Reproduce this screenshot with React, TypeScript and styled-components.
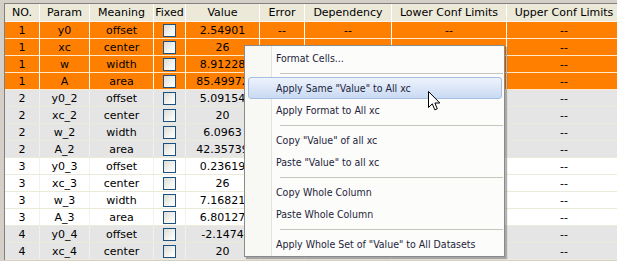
import React from 'react';
import styled, { createGlobalStyle } from 'styled-components';

const GlobalStyle = createGlobalStyle`
  html, body {
    margin: 0;
    padding: 0;
    overflow: hidden;
    background: #ffffff;
  }
`;

const Frame = styled.div`
  position: relative;
  width: 617px;
  height: 261px;
  overflow: hidden;
  background: #d4d0c8;
  padding: 3px 0 0 4px;
  box-sizing: border-box;
  font-family: "DejaVu Sans", Verdana, sans-serif;
  font-size: 11px;
`;

const Sheet = styled.div`
  border-top: 1px solid #808080;
  border-left: 1px solid #808080;
  background: #ffffff;
  width: 720px;
`;

const COLS = '35px 50px 64px 32px 74px 45px 87px 115px 115px';

const HeaderRow = styled.div`
  display: grid;
  grid-template-columns: ${COLS};
  height: 18px;
  background: #ece9d8;
  border-bottom: 1px solid #f6f5ee;
  box-sizing: border-box;
`;

const HeadCell = styled.div`
  display: flex;
  align-items: center;
  justify-content: center;
  border-right: 1px solid #ffffff;
  color: #000000;
  white-space: nowrap;
  overflow: hidden;
`;

const Row = styled.div<{ $tone: 'sel' | 'grey' | 'white' }>`
  display: grid;
  grid-template-columns: ${COLS};
  height: 17px;
  box-sizing: border-box;
  border-bottom: 1px solid ${p => (p.$tone === 'sel' ? '#ffe9c8' : '#ecead8')};
  background: ${p => (p.$tone === 'sel' ? '#ff8000' : p.$tone === 'grey' ? '#e5e5e5' : '#ffffff')};
`;

const Cell = styled.div<{ $tone: 'sel' | 'grey' | 'white' }>`
  display: flex;
  align-items: center;
  justify-content: center;
  border-right: 1px solid ${p => (p.$tone === 'sel' ? '#ffffff' : '#f2f1ea')};
  color: #000000;
  white-space: nowrap;
  overflow: hidden;
`;

const Check = styled.span`
  display: block;
  width: 13px;
  height: 13px;
  box-sizing: border-box;
  border: 1px solid #1c5180;
  background: linear-gradient(135deg, #dcdcd7 0%, #f4f4f0 60%, #ffffff 100%);
`;

const Menu = styled.div`
  position: absolute;
  left: 244px;
  top: 45px;
  width: 261px;
  box-sizing: border-box;
  padding: 1px 0;
  border: 1px solid #8a8a8a;
  background: linear-gradient(to right, #f8f8f5 0 26px, #e4e3dc 26px 27px, #fcfcfa 27px);
  box-shadow: 2px 2px 1px rgba(0, 0, 0, 0.28);
  font-family: "DejaVu Sans Condensed", "DejaVu Sans", sans-serif;
  font-stretch: semi-condensed;
  font-size: 10.5px;
  color: #1e1e3c;
`;

const Item = styled.div<{ $hot?: boolean }>`
  height: 22px;
  display: flex;
  align-items: center;
  box-sizing: border-box;
  white-space: nowrap;
  padding-left: ${p => (p.$hot ? '27px' : '31px')};
  margin: ${p => (p.$hot ? '0 2px 0 3px' : '0')};
  border: ${p => (p.$hot ? '1px solid #a7bde2' : 'none')};
  border-radius: ${p => (p.$hot ? '3px' : '0')};
  background: ${p => (p.$hot ? 'linear-gradient(#eef3fc, #c9daf3)' : 'transparent')};
`;

const Separator = styled.div`
  height: 8px;
  display: flex;
  align-items: center;
  padding-left: 35px;
  padding-right: 1px;
  &::after {
    content: '';
    flex: 1;
    height: 1px;
    background: #c5c4bd;
  }
`;

const Cursor = styled.svg`
  position: absolute;
  left: 428px;
  top: 91px;
`;

type Tone = 'sel' | 'grey' | 'white';

const headers = ['NO.', 'Param', 'Meaning', 'Fixed', 'Value', 'Error', 'Dependency', 'Lower Conf Limits', 'Upper Conf Limits'];

const rows: [number, string, string, string][] = [
  [1, 'y0', 'offset', '2.54901'],
  [1, 'xc', 'center', '26'],
  [1, 'w', 'width', '8.91228'],
  [1, 'A', 'area', '85.49972'],
  [2, 'y0_2', 'offset', '5.09154'],
  [2, 'xc_2', 'center', '20'],
  [2, 'w_2', 'width', '6.0963'],
  [2, 'A_2', 'area', '42.35739'],
  [3, 'y0_3', 'offset', '0.23619'],
  [3, 'xc_3', 'center', '26'],
  [3, 'w_3', 'width', '7.16821'],
  [3, 'A_3', 'area', '6.80127'],
  [4, 'y0_4', 'offset', '-2.1474'],
  [4, 'xc_4', 'center', '20'],
];

const toneOf = (n: number): Tone => (n === 1 ? 'sel' : n % 2 === 0 ? 'grey' : 'white');

const menu: (string | null)[] = [
  'Format Cells...',
  null,
  'Apply Same "Value" to All xc',
  'Apply Format to All xc',
  null,
  'Copy "Value" of all xc',
  'Paste "Value" to all xc',
  null,
  'Copy Whole Column',
  'Paste Whole Column',
  null,
  'Apply Whole Set of "Value" to All Datasets',
];

const App: React.FC = () => {
  return (
    <Frame>
      <GlobalStyle />
      <Sheet>
        <HeaderRow>
          {headers.map(h => (
            <HeadCell key={h}>{h}</HeadCell>
          ))}
        </HeaderRow>
        {rows.map(([no, param, meaning, value], i) => {
          const tone = toneOf(no);
          return (
            <Row key={i} $tone={tone}>
              <Cell $tone={tone}>{no}</Cell>
              <Cell $tone={tone}>{param}</Cell>
              <Cell $tone={tone}>{meaning}</Cell>
              <Cell $tone={tone}><Check /></Cell>
              <Cell $tone={tone}>{value}</Cell>
              <Cell $tone={tone}>--</Cell>
              <Cell $tone={tone}>--</Cell>
              <Cell $tone={tone}>--</Cell>
              <Cell $tone={tone}>--</Cell>
            </Row>
          );
        })}
      </Sheet>

      <Menu>
        {menu.map((m, i) =>
          m === null ? <Separator key={i} /> : <Item key={i} $hot={i === 2}>{m}</Item>
        )}
      </Menu>

      <Cursor width="14" height="21" viewBox="0 0 14 21">
        <path
          d="M0.5 0.5 L0.5 16.5 L4.3 12.8 L6.8 18.8 L9.3 17.8 L6.9 12 L11.8 12 Z"
          fill="#ffffff"
          stroke="#000000"
          strokeWidth="1"
          strokeLinejoin="miter"
        />
      </Cursor>
    </Frame>
  );
};

export default App;
